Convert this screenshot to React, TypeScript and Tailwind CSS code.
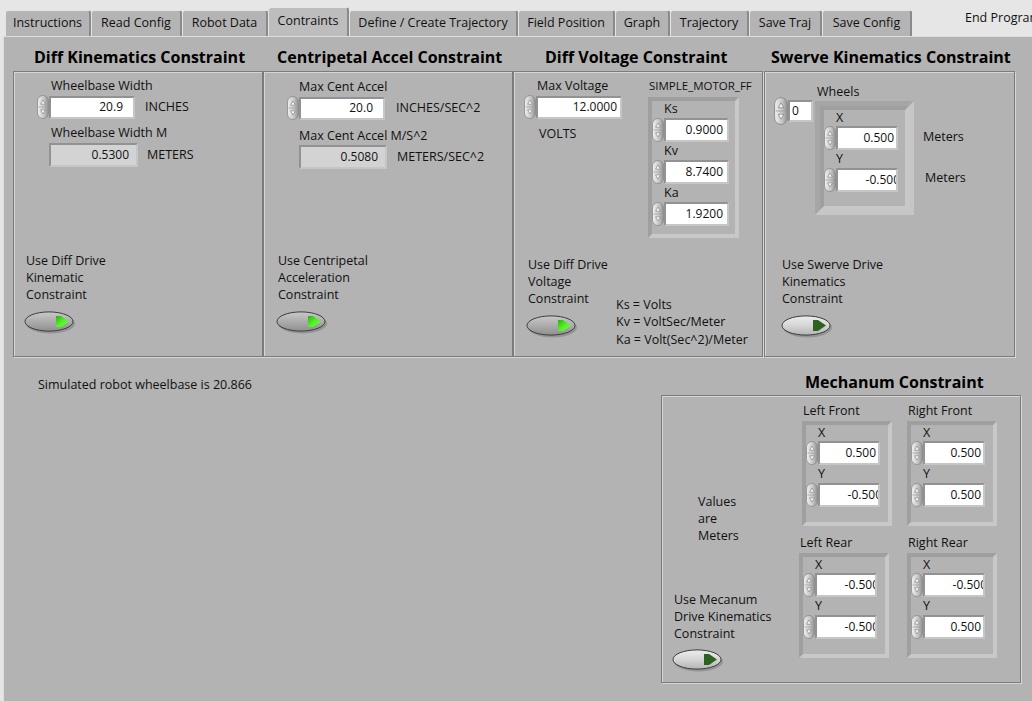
import clsx from "clsx";

const tabs: [string, string, boolean?][] = [
  ["Instructions", "w-[86px]"],
  ["Read Config", "w-[91px]"],
  ["Robot Data", "w-[86px]"],
  ["Contraints", "w-[81px]", true],
  ["Define / Create Trajectory", "w-[169px]"],
  ["Field Position", "w-[97px]"],
  ["Graph", "w-[55px]"],
  ["Trajectory", "w-[79px]"],
  ["Save Traj", "w-[73px]"],
  ["Save Config", "w-[90px]"],
];

const Spinner = ({ tall }: { tall?: boolean }) => (
  <svg width={tall ? 14 : 12} height={tall ? 28 : 24} viewBox="0 0 12 24" preserveAspectRatio="none" className="shrink-0">
    <defs>
      <linearGradient id="spin" x1="0" y1="0" x2="1" y2="0">
        <stop offset="0" stopColor="#f2f2f2" />
        <stop offset="0.6" stopColor="#c4c4c4" />
        <stop offset="1" stopColor="#8e8e8e" />
      </linearGradient>
    </defs>
    <rect x="0.5" y="0.5" width="11" height="23" rx="5.5" fill="url(#spin)" stroke="#8a8a8a" strokeWidth="0.8" />
    <line x1="1.5" y1="12" x2="10.5" y2="12" stroke="#9c9c9c" strokeWidth="0.7" />
    <path d="M3.6 9.2 L6 5 L8.4 9.2 Z" fill="#f7f7f7" stroke="#7a7a7a" strokeWidth="0.6" />
    <path d="M3.6 14.8 L6 19 L8.4 14.8 Z" fill="#f7f7f7" stroke="#7a7a7a" strokeWidth="0.6" />
  </svg>
);

const Led = ({ on }: { on?: boolean }) => (
  <svg width="52" height="24" viewBox="0 0 52 24" className="shrink-0">
    <defs>
      <linearGradient id="ledOn" x1="0" y1="0" x2="0" y2="1">
        <stop offset="0" stopColor="#c9c9c9" />
        <stop offset="0.5" stopColor="#acacac" />
        <stop offset="1" stopColor="#8f8f8f" />
      </linearGradient>
      <linearGradient id="ledOff" x1="0" y1="0" x2="0" y2="1">
        <stop offset="0" stopColor="#ededed" />
        <stop offset="0.5" stopColor="#d6d6d6" />
        <stop offset="1" stopColor="#b4b4b4" />
      </linearGradient>
      <linearGradient id="grnOn" x1="0" y1="0" x2="1" y2="1">
        <stop offset="0" stopColor="#2fae12" />
        <stop offset="0.5" stopColor="#52f226" />
        <stop offset="1" stopColor="#7cff4a" />
      </linearGradient>
    </defs>
    <ellipse cx="26.5" cy="12.5" rx="24.5" ry="10" fill="#6e6e6e" opacity="0.45" />
    <ellipse cx="25" cy="10.5" rx="24" ry="9.6" fill={on ? "url(#ledOn)" : "url(#ledOff)"} stroke="#3d3d3d" strokeWidth="1" />
    <path d="M32 5 H37 L45 10.5 L37 16 H32 Z" fill={on ? "url(#grnOn)" : "#2f6221"} />
  </svg>
);

const NumBox = ({ value, className, ind, clip }: { value: string; className: string; ind?: boolean; clip?: boolean }) => (
  <div
    className={clsx(
      "flex items-center justify-end overflow-hidden whitespace-nowrap border-2 border-t-[#929292] border-l-[#929292] border-r-[#c6c6c6] border-b-[#c6c6c6] text-[12px] leading-none text-[#111]",
      ind ? "bg-[#d3d3d3]" : "bg-white",
      className
    )}
  >
    <span className={clip ? "relative left-[6px]" : ""}>{value}</span>
  </div>
);

const Control = ({ value, box, clip }: { value: string; box: string; clip?: boolean }) => (
  <div className="flex items-center">
    <Spinner />
    <NumBox value={value} className={box} clip={clip} />
  </div>
);

const Lines = ({ items, className }: { items: string[]; className: string }) => (
  <div className={className}>
    {items.map((t) => (
      <div key={t}>{t}</div>
    ))}
  </div>
);

const frame = "border-4 border-t-[#9f9f9f] border-l-[#9f9f9f] border-r-[#c8c8c8] border-b-[#c8c8c8]";
const box = "border border-[#7b7b7b] shadow-[inset_1px_1px_0_#d6d6d6,1px_1px_0_#d6d6d6]";

const Heading = ({ children, className }: { children: string; className?: string }) => (
  <div className={clsx("h-[34px] whitespace-nowrap pt-[10px] text-[16px] font-bold leading-[20px] text-black", className)}>{children}</div>
);

// one X / Y cluster, used by swerve and mecanum
const XY = ({ x, y, xClip, yClip }: { x: string; y: string; xClip?: boolean; yClip?: boolean }) => (
  <div className="flex flex-col">
    <div className="ml-[12px] mt-[1px] leading-[14px]">X</div>
    <div className="mt-[1px]">
      <Control value={x} box="h-[24px] w-[62px] pr-[2px]" clip={xClip} />
    </div>
    <div className="ml-[12px] mt-[2px] leading-[14px]">Y</div>
    <div className="mt-[2px]">
      <Control value={y} box="h-[24px] w-[62px] pr-[2px]" clip={yClip} />
    </div>
  </div>
);

const Wheel = ({ label, x, y, xClip, yClip, shift }: { label: string; x: string; y: string; xClip?: boolean; yClip?: boolean; shift: string }) => (
  <div className={clsx("flex flex-col", shift)}>
    <div className="ml-[1px] leading-[14px]">{label}</div>
    <div className={clsx(frame, "mt-[3px] h-[105px] w-[90px]")}>
      <XY x={x} y={y} xClip={xClip} yClip={yClip} />
    </div>
  </div>
);

export default function App() {
  return (
    <div className="h-[701px] w-[1032px] overflow-hidden bg-[#e6e6e6] font-['Open_Sans',sans-serif] text-[12.5px] leading-[16px] text-[#111]">
      {/* tab strip */}
      <div className="flex h-[36px] items-end pl-[5px]">
        {tabs.map(([t, w, active]) => (
          <div
            key={t}
            className={clsx(
              "flex shrink-0 justify-center whitespace-nowrap rounded-t-[3px] border-l border-t border-[#e4e4e4] border-r-2 border-r-[#8a8a8a]",
              active ? "h-[29px] bg-[#bdbdbd] pt-[5px]" : "h-[26px] bg-[#b4b4b4] pt-[4px]",
              w
            )}
          >
            {t}
          </div>
        ))}
        <div className="ml-[53px] shrink-0 self-start whitespace-nowrap pt-[10px]">End Program</div>
      </div>

      {/* tab page */}
      <div className="ml-[3px] h-[665px] border-l border-t border-[#dcdcdc] bg-[#b3b3b3]">
        <div className="flex pl-[9px]">
          {/* Diff kinematics */}
          <div className="flex w-[250px] flex-col">
            <Heading className="pl-[21px]">Diff Kinematics Constraint</Heading>
            <div className={clsx(box, "flex h-[286px] flex-col")}>
              <div className="ml-[37px] mt-[6px]">Wheelbase Width</div>
              <div className="ml-[23px] mt-[1px] flex items-center">
                <Control value="20.9" box="h-[23px] w-[86px] pr-[10px]" />
                <div className="ml-[10px]">INCHES</div>
              </div>
              <div className="ml-[37px] mt-[6px]">Wheelbase Width M</div>
              <div className="ml-[35px] mt-[2px] flex items-center">
                <NumBox ind value="0.5300" className="h-[24px] w-[89px] pr-[7px]" />
                <div className="ml-[9px]">METERS</div>
              </div>
              <div className="mt-auto pb-[21px]">
                <Lines className="ml-[12px] leading-[17px]" items={["Use Diff Drive", "Kinematic", "Constraint"]} />
                <div className="ml-[10px] mt-[8px]">
                  <Led on />
                </div>
              </div>
            </div>
          </div>

          {/* Centripetal */}
          <div className="flex w-[250px] flex-col">
            <Heading className="pl-[14px]">Centripetal Accel Constraint</Heading>
            <div className={clsx(box, "flex h-[286px] flex-col")}>
              <div className="ml-[35px] mt-[7px]">Max Cent Accel</div>
              <div className="ml-[23px] mt-[1px] flex items-center">
                <Control value="20.0" box="h-[23px] w-[86px] pr-[10px]" />
                <div className="ml-[11px]">INCHES/SEC^2</div>
              </div>
              <div className="ml-[35px] mt-[8px]">Max Cent Accel M/S^2</div>
              <div className="ml-[35px] mt-[1px] flex items-center">
                <NumBox ind value="0.5080" className="h-[24px] w-[88px] pr-[7px]" />
                <div className="ml-[10px]">METERS/SEC^2</div>
              </div>
              <div className="mt-auto pb-[21px]">
                <Lines className="ml-[14px] leading-[17px]" items={["Use Centripetal", "Acceleration", "Constraint"]} />
                <div className="ml-[12px] mt-[8px]">
                  <Led on />
                </div>
              </div>
            </div>
          </div>

          {/* Diff voltage */}
          <div className="flex w-[250px] flex-col">
            <Heading className="pl-[32px]">Diff Voltage Constraint</Heading>
            <div className={clsx(box, "flex h-[286px] flex-col")}>
              <div className="flex">
                <div className="ml-[10px] w-[124px]">
                  <div className="ml-[13px] mt-[6px]">Max Voltage</div>
                  <div className="mt-[1px]">
                    <Control value="12.0000" box="h-[23px] w-[86px] pr-[3px]" />
                  </div>
                  <div className="ml-[15px] mt-[7px]">VOLTS</div>
                </div>
                <div>
                  <div className="ml-[1px] mt-[6px] whitespace-nowrap text-[11.5px]">SIMPLE_MOTOR_FF</div>
                  <div className={clsx(frame, "mt-[3px] h-[141px] w-[91px] pt-[1px]")}>
                    {[
                      ["Ks", "0.9000"],
                      ["Kv", "8.7400"],
                      ["Ka", "1.9200"],
                    ].map(([k, v], i) => (
                      <div key={k} className={i ? "mt-[2px]" : ""}>
                        <div className="ml-[12px] leading-[14px]">{k}</div>
                        <div className="mt-[2px]">
                          <Control value={v} box="h-[24px] w-[65px] pr-[4px]" />
                        </div>
                      </div>
                    ))}
                  </div>
                </div>
              </div>
              <div className="mt-auto flex items-end pb-[8px]">
                <div className="mb-[9px] w-[102px] shrink-0">
                  <Lines className="ml-[14px] leading-[17px]" items={["Use Diff Drive", "Voltage", "Constraint"]} />
                  <div className="ml-[12px] mt-[8px]">
                    <Led on />
                  </div>
                </div>
                <Lines className="whitespace-nowrap leading-[17.5px]" items={["Ks = Volts", "Kv = VoltSec/Meter", "Ka = Volt(Sec^2)/Meter"]} />
              </div>
            </div>
          </div>

          {/* Swerve */}
          <div className="ml-[1px] flex w-[251px] flex-col">
            <Heading className="pl-[7px]">Swerve Kinematics Constraint</Heading>
            <div className={clsx(box, "flex h-[286px] flex-col")}>
              <div className="flex">
                <div className="ml-[9px] mt-[25px] flex h-[28px] items-center self-start">
                  <Spinner tall />
                  <NumBox value="0" className="h-[22px] w-[25px] !justify-start pl-[2px]" />
                </div>
                <div className="ml-[2px]">
                  <div className="ml-[2px] mt-[13px] leading-[14px]">Wheels</div>
                  <div className="mt-[2px] h-[114px] w-[99px] border-[5px] border-t-[#a6a6a6] border-l-[#a6a6a6] border-r-[#c6c6c6] border-b-[#c6c6c6]">
                    <div className={clsx(frame, "h-full w-full")}>
                      <XY x="0.500" y="-0.500" yClip />
                    </div>
                  </div>
                </div>
                <div className="ml-[9px] mt-[58px] leading-[14px]">
                  <div>Meters</div>
                  <div className="ml-[2px] mt-[27px]">Meters</div>
                </div>
              </div>
              <div className="mt-auto pb-[17px]">
                <Lines className="ml-[17px] leading-[17px]" items={["Use Swerve Drive", "Kinematics", "Constraint"]} />
                <div className="ml-[16px] mt-[8px]">
                  <Led />
                </div>
              </div>
            </div>
          </div>
        </div>

        {/* lower area */}
        <div className="flex">
          <div className="w-[657px]">
            <div className="ml-[34px] mt-[20px]">Simulated robot wheelbase is 20.866</div>
          </div>
          <div>
            <div className="ml-[144px] mt-[15px] whitespace-nowrap text-[16px] font-bold leading-[20px] text-black">Mechanum Constraint</div>
            <div className={clsx(box, "mt-[3px] flex h-[288px] w-[360px]")}>
              <div className="w-[137px] whitespace-nowrap">
                <Lines className="ml-[36px] mt-[97px] leading-[17px]" items={["Values", "are", "Meters"]} />
                <Lines className="ml-[12px] mt-[47px] leading-[17px]" items={["Use Mecanum", "Drive Kinematics", "Constraint"]} />
                <div className="ml-[10px] mt-[7px]">
                  <Led />
                </div>
              </div>
              <div className="w-[108px]">
                <div className="mt-[8px]">
                  <Wheel label="Left Front" x="0.500" y="-0.500" yClip shift="ml-[3px]" />
                </div>
                <div className="mt-[10px]">
                  <Wheel label="Left Rear" x="-0.500" y="-0.500" xClip yClip shift="" />
                </div>
              </div>
              <div>
                <div className="mt-[8px]">
                  <Wheel label="Right Front" x="0.500" y="0.500" shift="" />
                </div>
                <div className="mt-[10px]">
                  <Wheel label="Right Rear" x="-0.500" y="0.500" xClip shift="" />
                </div>
              </div>
            </div>
          </div>
        </div>
      </div>
    </div>
  );
}
